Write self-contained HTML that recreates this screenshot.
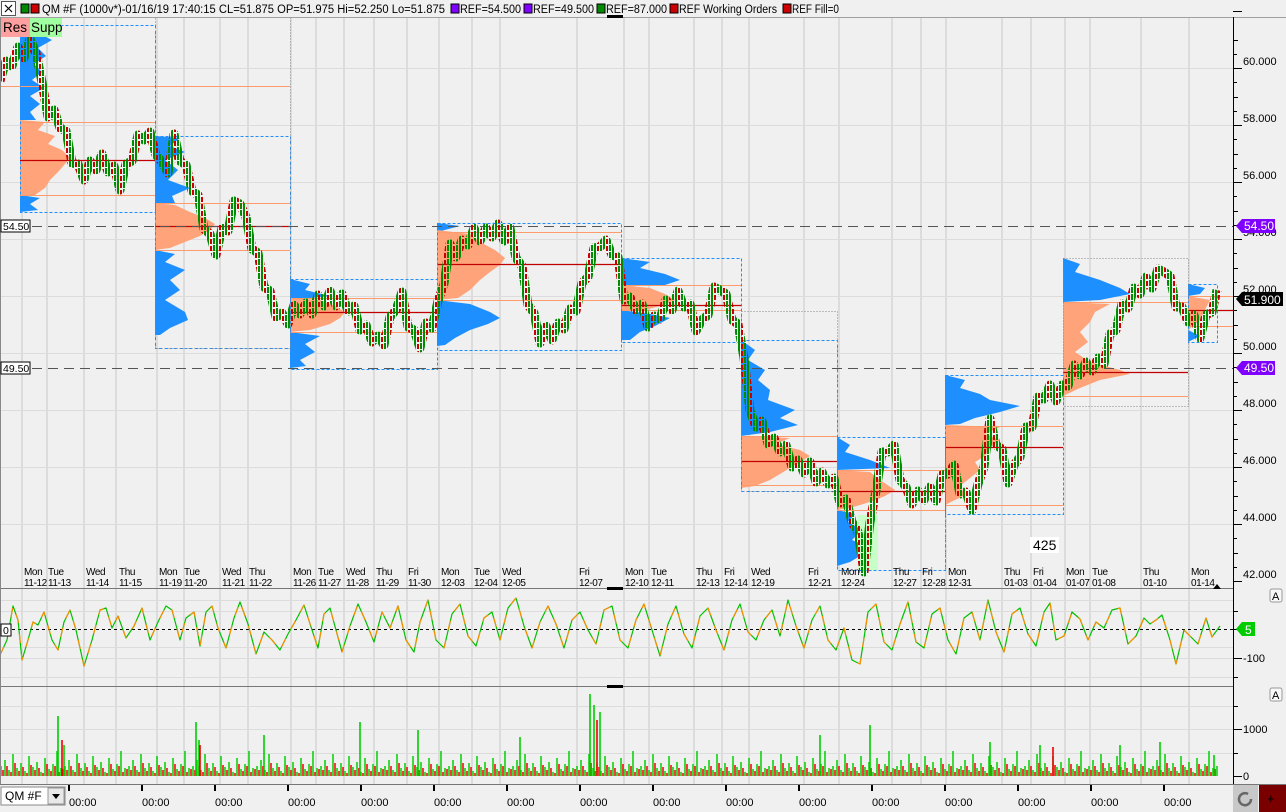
<!DOCTYPE html>
<html><head><meta charset="utf-8">
<style>
html,body{margin:0;padding:0;background:#f0f0f0;overflow:hidden;width:1286px;height:812px}
svg{display:block;font-family:"Liberation Sans",sans-serif}
</style></head><body>
<svg width="1286" height="812" xmlns="http://www.w3.org/2000/svg">
<defs>
<pattern id="vg" x="0" y="716" width="64" height="60" patternUnits="userSpaceOnUse">
<path d="M1 60V50M5 60V44M9 60V54M13 60V38M17 60V52M21 60V47M25 60V55M29 60V40M33 60V51M37 60V46M41 60V56M45 60V42M49 60V53M53 60V48M57 60V35M61 60V52" stroke="#00d000" stroke-width="1.5"/>
<path d="M3 60V54M7 60V50M11 60V56M15 60V47M19 60V55M23 60V51M27 60V57M31 60V49M35 60V54M39 60V52M43 60V57M47 60V48M51 60V55M55 60V50M59 60V56M63 60V53" stroke="#f00000" stroke-width="1.5"/>
</pattern>
<pattern id="cp" x="0" y="0" width="9" height="7" patternUnits="userSpaceOnUse">
<rect x="0" y="0" width="2" height="7" fill="#008c00"/>
<rect x="3" y="1" width="2" height="5" fill="#c80000"/>
<rect x="6" y="0" width="2" height="6" fill="#008c00"/>
</pattern>
<polyline id="os" fill="none" stroke-width="1.2" stroke-linejoin="round" points="0,655 7,640 13,606 18,620 22,660 28,640 33,622 38,625 44,612 52,640 58,650 64,622 70,610 76,630 84,666 92,640 100,610 106,608 112,628 118,616 126,638 134,626 142,608 150,640 158,622 166,606 172,610 180,640 186,618 194,612 200,646 206,612 212,606 218,628 226,648 234,618 240,602 248,624 256,654 264,632 272,640 280,650 288,634 296,620 304,605 312,630 318,648 324,614 330,608 336,630 342,652 350,626 358,604 366,622 374,642 382,612 390,628 398,606 406,640 414,652 420,622 428,600 436,640 444,648 452,614 460,604 468,636 476,646 484,618 492,612 500,640 508,608 516,598 524,626 532,648 540,622 548,606 556,624 564,648 572,620 580,612 588,630 596,644 604,610 612,606 620,640 628,648 636,620 644,604 652,630 660,656 668,624 676,606 684,634 692,648 700,616 708,608 716,630 724,650 732,620 740,604 748,632 756,640 764,620 772,610 780,636 788,600 796,626 804,648 812,620 820,606 828,640 836,650 844,628 852,660 860,664 868,612 876,604 884,642 892,650 900,624 908,602 916,642 924,648 932,614 940,608 948,640 956,654 964,618 972,612 980,640 988,600 996,632 1004,652 1012,614 1020,608 1028,634 1036,646 1044,612 1050,603 1056,640 1064,636 1072,612 1080,619 1088,640 1096,622 1104,628 1112,610 1120,608 1128,644 1136,636 1144,618 1150,624 1156,620 1162,615 1170,640 1176,664 1184,630 1190,636 1198,644 1206,618 1212,637 1220,626"/>
</defs>
<rect width="1286" height="812" fill="#f0f0f0"/>
<path d="M22 17V784M47 17V784M84 17V784M116 17V784M157 17V784M184 17V784M220 17V784M248 17V784M291 17V784M316 17V784M344 17V784M374 17V784M407 17V784M439 17V784M472 17V784M500 17V784M577 17V784M624 17V784M649 17V784M694 17V784M722 17V784M749 17V784M804 17V784M839 17V784M892 17V784M921 17V784M946 17V784M1002 17V784M1031 17V784M1065 17V784M1090 17V784M1141 17V784M1189 17V784" stroke="#dcdcdc" stroke-width="2"/>
<path d="M0 68.5H1233M0 125.5H1233M0 182.5H1233M0 239.5H1233M0 296.5H1233M0 353.5H1233M0 410.5H1233M0 467.5H1233M0 524.5H1233M0 600.5H1233M0 611.5H1233M0 647.5H1233M0 658.5H1233M0 677.5H1233M0 706.5H1233M0 729.5H1233M0 753.5H1233" stroke="#dcdcdc"/>
<g fill="#1e8fff">
<polygon points="20,25 48,27 40,34 52,40 38,48 46,56 34,64 42,72 32,80 44,88 30,96 40,104 30,112 36,120 20,120"/>
<polygon points="20,195 40,198 30,204 38,210 20,212"/>
<polygon points="155,136 180,138 170,146 185,152 165,160 178,170 168,180 190,188 172,196 175,203 155,203"/>
<polygon points="155,250 175,254 165,262 185,270 170,280 180,290 165,300 185,312 188,320 170,328 160,335 155,335"/>
<polygon points="290,279 310,284 305,290 330,296 290,300"/>
<polygon points="290,332 320,336 305,344 315,352 300,360 306,366 290,368"/>
<polygon points="437,300 470,304 490,312 500,318 488,324 470,330 455,338 445,345 437,346"/>
<polygon points="437,223 460,226 437,232"/>
<polygon points="621,258 650,262 640,268 665,274 680,280 665,285 621,285"/>
<polygon points="621,310 650,314 670,318 655,326 640,332 630,340 621,340"/>
<polygon points="741,340 755,350 748,360 765,370 758,380 770,390 768,400 795,410 780,418 798,425 770,432 741,436"/>
<polygon points="837,437 850,445 845,452 870,460 890,468 837,470"/>
<polygon points="837,510 855,514 848,522 862,530 852,540 870,548 860,556 850,562 837,566"/>
<polygon points="945,375 965,380 960,388 980,394 990,400 1020,406 1000,412 975,418 960,424 945,425"/>
<polygon points="1063,258 1080,264 1075,272 1100,280 1120,288 1130,294 1100,300 1063,302"/>
<polygon points="1188,284 1205,288 1200,294 1188,296"/>
<polygon points="1188,330 1200,336 1188,342"/>
</g>
<rect x="858" y="515" width="20" height="55" fill="#c8ffc8"/>
<g fill="#ffa47a">
<polygon points="20,120 45,122 38,130 55,136 48,144 62,150 70,158 65,164 58,172 50,180 45,188 35,195 20,195"/>
<polygon points="155,203 175,205 190,212 205,218 215,224 210,230 200,236 185,242 170,248 155,250"/>
<polygon points="290,298 320,300 335,306 345,312 340,318 330,324 310,330 290,332"/>
<polygon points="437,230 470,234 480,242 495,250 505,258 500,265 490,272 480,280 470,290 458,298 437,300"/>
<polygon points="621,285 650,288 665,294 675,300 660,306 645,310 621,310"/>
<polygon points="741,436 790,438 775,444 800,450 810,456 800,462 790,468 780,474 770,480 755,486 741,488"/>
<polygon points="837,470 870,472 880,480 895,490 885,496 870,502 850,508 837,510"/>
<polygon points="945,425 1000,427 985,434 1000,440 990,448 985,456 975,462 980,470 970,478 960,486 965,495 955,500 945,505"/>
<polygon points="1063,302 1110,304 1095,312 1090,322 1080,332 1088,342 1075,352 1090,362 1120,370 1130,374 1100,380 1080,388 1063,396"/>
<polygon points="1188,296 1210,300 1205,310 1200,320 1188,330"/>
</g>
<path d="M0 86.5H290M20 122.5H155M20 195.5H155M155 203.5H290M155 250.5H290M290 298.5H437M290 332.5H437M437 232.5H621M437 300.5H621M621 285.5H741M621 310.5H741M741 436.5H837M741 485.5H837M837 470.5H945M837 510.5H945M945 426.5H1063M945 505.5H1063M1063 302.5H1188M1063 396.5H1188M1188 296.5H1233M1188 326.5H1233" stroke="#ff9a6a"/>
<path d="M20 160.5H155M155 226.5H290M290 312.5H437M437 264.5H621M621 305.5H741M741 461.5H837M837 491.5H945M945 447.5H1063M1063 372.5H1188M1188 310.5H1233" stroke="#c00000" stroke-width="1.3"/>
<g fill="none" stroke="#1e8fff" stroke-dasharray="3,2">
<rect x="20.5" y="25.5" width="135" height="187"/>
<rect x="155.5" y="136.5" width="135" height="212"/>
<rect x="290.5" y="279.5" width="147" height="90"/>
<rect x="437.5" y="223.5" width="184" height="127"/>
<rect x="621.5" y="258.5" width="120" height="84"/>
<rect x="741.5" y="340.5" width="96" height="151"/>
<rect x="837.5" y="437.5" width="108" height="133"/>
<rect x="945.5" y="375.5" width="118" height="139"/>
<rect x="1188.5" y="284.5" width="29" height="58"/>
</g>
<g fill="none" stroke="#888" stroke-dasharray="1,2">
<rect x="155.5" y="17.5" width="135" height="331"/>
<rect x="741.5" y="311.5" width="96" height="180"/>
<path d="M945.5 514V570"/>
<rect x="1063.5" y="258.5" width="125" height="148"/>
</g>
<path d="M0 226.5H1233M0 368.5H1233" stroke="#555" stroke-dasharray="10,6"/>
<polyline fill="none" stroke="url(#cp)" stroke-width="9" stroke-linejoin="round" points="0,81 6,61 12,66 18,47 24,58 30,39 36,53 42,82 48,117 54,110 60,128 66,131 72,163 78,164 84,180 90,161 96,170 102,154 108,172 114,166 120,190 126,164 132,161 138,135 144,140 150,132 156,155 162,162 168,173 174,134 180,161 186,165 192,191 198,195 204,229 210,234 216,255 222,228 228,231 234,201 240,204 246,217 252,249 258,253 264,287 270,291 276,317 282,313 288,324 294,305 300,314 306,303 312,314 318,295 324,306 330,291 336,306 342,294 348,311 354,306 360,330 366,325 372,342 378,336 384,345 390,317 396,310 402,292 408,327 414,330 420,348 426,323 432,328 438,301 444,284 450,244 456,257 462,240 468,245 474,228 480,241 486,228 492,237 498,224 504,241 510,228 516,258 522,266 528,305 534,313 540,343 546,326 552,340 558,323 564,329 570,309 576,311 582,283 588,277 594,248 600,247 606,240 612,255 618,257 624,300 630,297 636,311 642,304 648,327 654,316 660,319 666,300 672,310 678,291 684,307 690,304 696,331 702,320 708,315 714,287 720,290 726,294 732,320 738,324 744,358 750,411 756,427 762,421 768,444 774,438 780,452 786,445 792,467 798,460 804,473 810,462 816,482 822,472 828,484 834,478 840,503 846,499 852,522 858,532 864,572 870,522 876,491 882,452 888,452 894,445 900,480 906,487 912,504 918,491 924,500 930,487 936,501 942,475 948,474 954,465 960,494 966,492 972,510 978,484 984,467 990,419 996,445 1002,449 1008,483 1014,465 1020,457 1026,427 1032,427 1038,397 1044,399 1050,385 1056,401 1062,385 1068,386 1074,365 1080,375 1086,362 1092,371 1098,358 1104,364 1110,334 1116,330 1122,304 1128,308 1134,288 1140,294 1146,277 1152,288 1158,269 1164,272 1170,276 1176,307 1182,307 1188,322 1194,315 1200,338 1206,315 1212,312 1217,290"/>
<path d="M0 629.5H1233" stroke="#000" stroke-dasharray="3,3"/>
<use href="#os" stroke="#00c000"/>
<use href="#os" stroke="#ff8c00" stroke-dasharray="9,11"/>
<rect x="0" y="716" width="1218" height="60" fill="url(#vg)"/>
<path d="M58 776V716M64 776V745M196 776V722M199 776V740M264 776V735M360 776V722M418 776V730M520 776V737M590 776V694M594 776V705M600 776V712M820 776V735M870 776V725M990 776V742M1040 776V745M1120 776V745M1160 776V742M1214 776V755" stroke="#00d000" stroke-width="1.6"/>
<path d="M62 776V740M200 776V745M597 776V720M1053 776V747" stroke="#f00000" stroke-width="1.6"/>
<rect x="0" y="0" width="1286" height="17" fill="#f0f0f0"/>
<line x1="0" y1="17.5" x2="1286" y2="17.5" stroke="#a0a0a0"/>
<rect x="1.5" y="1.5" width="14" height="14" fill="#fff" stroke="#555"/>
<path d="M5 5L12 12M12 5L5 12" stroke="#000" stroke-width="1.2"/>
<rect x="21" y="4" width="8" height="9" fill="#080" stroke="#000"/>
<rect x="31" y="4" width="8" height="9" fill="#c00" stroke="#000"/>
<g font-size="11.5">
<text x="42" y="13" textLength="403" lengthAdjust="spacingAndGlyphs">QM #F (1000v*)-01/16/19 17:40:15 CL=51.875 OP=51.975 Hi=52.250 Lo=51.875</text>
<rect x="451" y="4" width="8" height="9" fill="#8000ff" stroke="#000"/><text x="460" y="13" textLength="61" lengthAdjust="spacingAndGlyphs">REF=54.500</text>
<rect x="524" y="4" width="8" height="9" fill="#8000ff" stroke="#000"/><text x="533" y="13" textLength="61" lengthAdjust="spacingAndGlyphs">REF=49.500</text>
<rect x="597" y="4" width="8" height="9" fill="#080" stroke="#000"/><text x="606" y="13" textLength="61" lengthAdjust="spacingAndGlyphs">REF=87.000</text>
<rect x="670" y="4" width="8" height="9" fill="#c00" stroke="#000"/><text x="679" y="13" textLength="98" lengthAdjust="spacingAndGlyphs">REF Working Orders</text>
<rect x="783" y="4" width="8" height="9" fill="#c00" stroke="#000"/><text x="792" y="13" textLength="47" lengthAdjust="spacingAndGlyphs">REF Fill=0</text>
</g>
<rect x="607" y="15" width="16" height="3" fill="#000"/>
<rect x="1" y="18" width="29" height="19" fill="#ffa0a0"/><text x="3" y="32" font-size="13.5">Res</text>
<rect x="30" y="18" width="32" height="19" fill="#a0ffa0"/><text x="31" y="32" font-size="13.5">Supp</text>
<line x1="0" y1="588.5" x2="1233" y2="588.5" stroke="#777"/>
<line x1="0" y1="686.5" x2="1233" y2="686.5" stroke="#777"/>
<line x1="0" y1="784.5" x2="1286" y2="784.5" stroke="#777"/>
<rect x="607" y="587" width="16" height="3" fill="#000"/>
<rect x="607" y="685" width="16" height="3" fill="#000"/>
<line x1="1233.5" y1="17" x2="1233.5" y2="784" stroke="#000"/>
<line x1="0.5" y1="17" x2="0.5" y2="784" stroke="#888"/>
<path d="M1233 11.5h9M1233 68.5h9M1233 125.5h9M1233 182.5h9M1233 239.5h9M1233 296.5h9M1233 353.5h9M1233 410.5h9M1233 467.5h9M1233 524.5h9M1233 581.5h9M1233 40.5h5M1233 97.5h5M1233 154.5h5M1233 211.5h5M1233 268.5h5M1233 325.5h5M1233 382.5h5M1233 439.5h5M1233 496.5h5M1233 553.5h5M1233 54.5h4M1233 82.5h4M1233 111.5h4M1233 139.5h4M1233 168.5h4M1233 196.5h4M1233 225.5h4M1233 253.5h4M1233 282.5h4M1233 310.5h4M1233 339.5h4M1233 367.5h4M1233 396.5h4M1233 424.5h4M1233 453.5h4M1233 481.5h4M1233 510.5h4M1233 538.5h4M1233 567.5h4M1233 611.5h5M1233 629.5h5M1233 658.5h9M1233 677.5h5M1233 706.5h5M1233 729.5h9M1233 753.5h5M1233 776.5h9" stroke="#000"/>
<g font-size="11">
<text x="1243" y="65">60.000</text><text x="1243" y="122">58.000</text><text x="1243" y="179">56.000</text><text x="1243" y="236">54.000</text><text x="1243" y="293">52.000</text><text x="1243" y="350">50.000</text><text x="1243" y="407">48.000</text><text x="1243" y="464">46.000</text><text x="1243" y="521">44.000</text><text x="1243" y="578">42.000</text>
<text x="1243" y="662">-100</text><text x="1243" y="733">1000</text><text x="1243" y="780">0</text>
</g>
<g font-size="10" letter-spacing="-0.4">
<text x="24" y="575">Mon</text><text x="24" y="586">11-12</text>
<text x="48" y="575">Tue</text><text x="48" y="586">11-13</text>
<text x="86" y="575">Wed</text><text x="86" y="586">11-14</text>
<text x="119" y="575">Thu</text><text x="119" y="586">11-15</text>
<text x="159" y="575">Mon</text><text x="159" y="586">11-19</text>
<text x="184" y="575">Tue</text><text x="184" y="586">11-20</text>
<text x="222" y="575">Wed</text><text x="222" y="586">11-21</text>
<text x="249" y="575">Thu</text><text x="249" y="586">11-22</text>
<text x="293" y="575">Mon</text><text x="293" y="586">11-26</text>
<text x="318" y="575">Tue</text><text x="318" y="586">11-27</text>
<text x="346" y="575">Wed</text><text x="346" y="586">11-28</text>
<text x="376" y="575">Thu</text><text x="376" y="586">11-29</text>
<text x="408" y="575">Fri</text><text x="408" y="586">11-30</text>
<text x="441" y="575">Mon</text><text x="441" y="586">12-03</text>
<text x="474" y="575">Tue</text><text x="474" y="586">12-04</text>
<text x="502" y="575">Wed</text><text x="502" y="586">12-05</text>
<text x="579" y="575">Fri</text><text x="579" y="586">12-07</text>
<text x="625" y="575">Mon</text><text x="625" y="586">12-10</text>
<text x="651" y="575">Tue</text><text x="651" y="586">12-11</text>
<text x="696" y="575">Thu</text><text x="696" y="586">12-13</text>
<text x="724" y="575">Fri</text><text x="724" y="586">12-14</text>
<text x="751" y="575">Wed</text><text x="751" y="586">12-19</text>
<text x="808" y="575">Fri</text><text x="808" y="586">12-21</text>
<text x="841" y="575">Mon</text><text x="841" y="586">12-24</text>
<text x="893" y="575">Thu</text><text x="893" y="586">12-27</text>
<text x="922" y="575">Fri</text><text x="922" y="586">12-28</text>
<text x="948" y="575">Mon</text><text x="948" y="586">12-31</text>
<text x="1004" y="575">Thu</text><text x="1004" y="586">01-03</text>
<text x="1033" y="575">Fri</text><text x="1033" y="586">01-04</text>
<text x="1066" y="575">Mon</text><text x="1066" y="586">01-07</text>
<text x="1092" y="575">Tue</text><text x="1092" y="586">01-08</text>
<text x="1143" y="575">Thu</text><text x="1143" y="586">01-10</text>
<text x="1191" y="575">Mon</text><text x="1191" y="586">01-14</text>
</g>
<rect x="1" y="220" width="29" height="12" fill="#fff" stroke="#000"/><text x="3" y="230" font-size="10.5">54.50</text>
<rect x="1" y="362" width="29" height="12" fill="#fff" stroke="#000"/><text x="3" y="372" font-size="10.5">49.50</text>
<rect x="1" y="624" width="10" height="12" fill="#fff" stroke="#000"/><text x="3" y="634" font-size="10.5">0</text>
<path d="M1236 226L1242 219H1275V233H1242Z" fill="#8000ff"/><text x="1244" y="230" font-size="12" fill="#fff">54.50</text>
<path d="M1236 368L1242 361H1275V375H1242Z" fill="#8000ff"/><text x="1244" y="372" font-size="12" fill="#fff">49.50</text>
<path d="M1236 299L1242 292H1283V306H1242Z" fill="#000"/><text x="1244" y="304" font-size="12" fill="#fff">51.900</text>
<path d="M1236 629L1242 622H1255V636H1242Z" fill="#0c0"/><text x="1245" y="634" font-size="12" fill="#fff">5</text>
<rect x="1030" y="537" width="29" height="16" fill="#fff"/><text x="1033" y="550" font-size="14">425</text>
<rect x="1270" y="589" width="12" height="13" rx="2" fill="#f8f8f8" stroke="#999"/><text x="1272" y="600" font-size="11">A</text>
<rect x="1270" y="688" width="12" height="13" rx="2" fill="#f8f8f8" stroke="#999"/><text x="1272" y="699" font-size="11">A</text>
<path d="M1213 589L1217 584L1221 589Z" fill="#000"/>
<rect x="1" y="787" width="64" height="18" fill="#fff" stroke="#888"/>
<text x="5" y="800" font-size="12">QM #F</text>
<rect x="48" y="788" width="16" height="16" fill="#e8e8e8" stroke="#999"/>
<path d="M52 794L60 794L56 799Z" fill="#000"/>
<path d="M69 785v6M142 785v6M215 785v6M288 785v6M361 785v6M434 785v6M507 785v6M580 785v6M653 785v6M726 785v6M799 785v6M872 785v6M945 785v6M1018 785v6M1091 785v6M1164 785v6" stroke="#000" stroke-width="2"/>
<g font-size="11">
<text x="69" y="806">00:00</text><text x="142" y="806">00:00</text><text x="215" y="806">00:00</text><text x="288" y="806">00:00</text><text x="361" y="806">00:00</text><text x="434" y="806">00:00</text><text x="507" y="806">00:00</text><text x="580" y="806">00:00</text><text x="653" y="806">00:00</text><text x="726" y="806">00:00</text><text x="799" y="806">00:00</text><text x="872" y="806">00:00</text><text x="945" y="806">00:00</text><text x="1018" y="806">00:00</text><text x="1091" y="806">00:00</text><text x="1164" y="806">00:00</text>
</g>
<rect x="1233" y="785" width="25" height="27" fill="#c8c8c8"/>
<path d="M1251 799a6 6 0 1 1 -3 -5" fill="none" stroke="#666" stroke-width="2.5"/>
<rect x="1259" y="785" width="27" height="27" fill="#7a0000"/><text x="1267" y="803" font-size="13">+</text>
</svg>
</body></html>
